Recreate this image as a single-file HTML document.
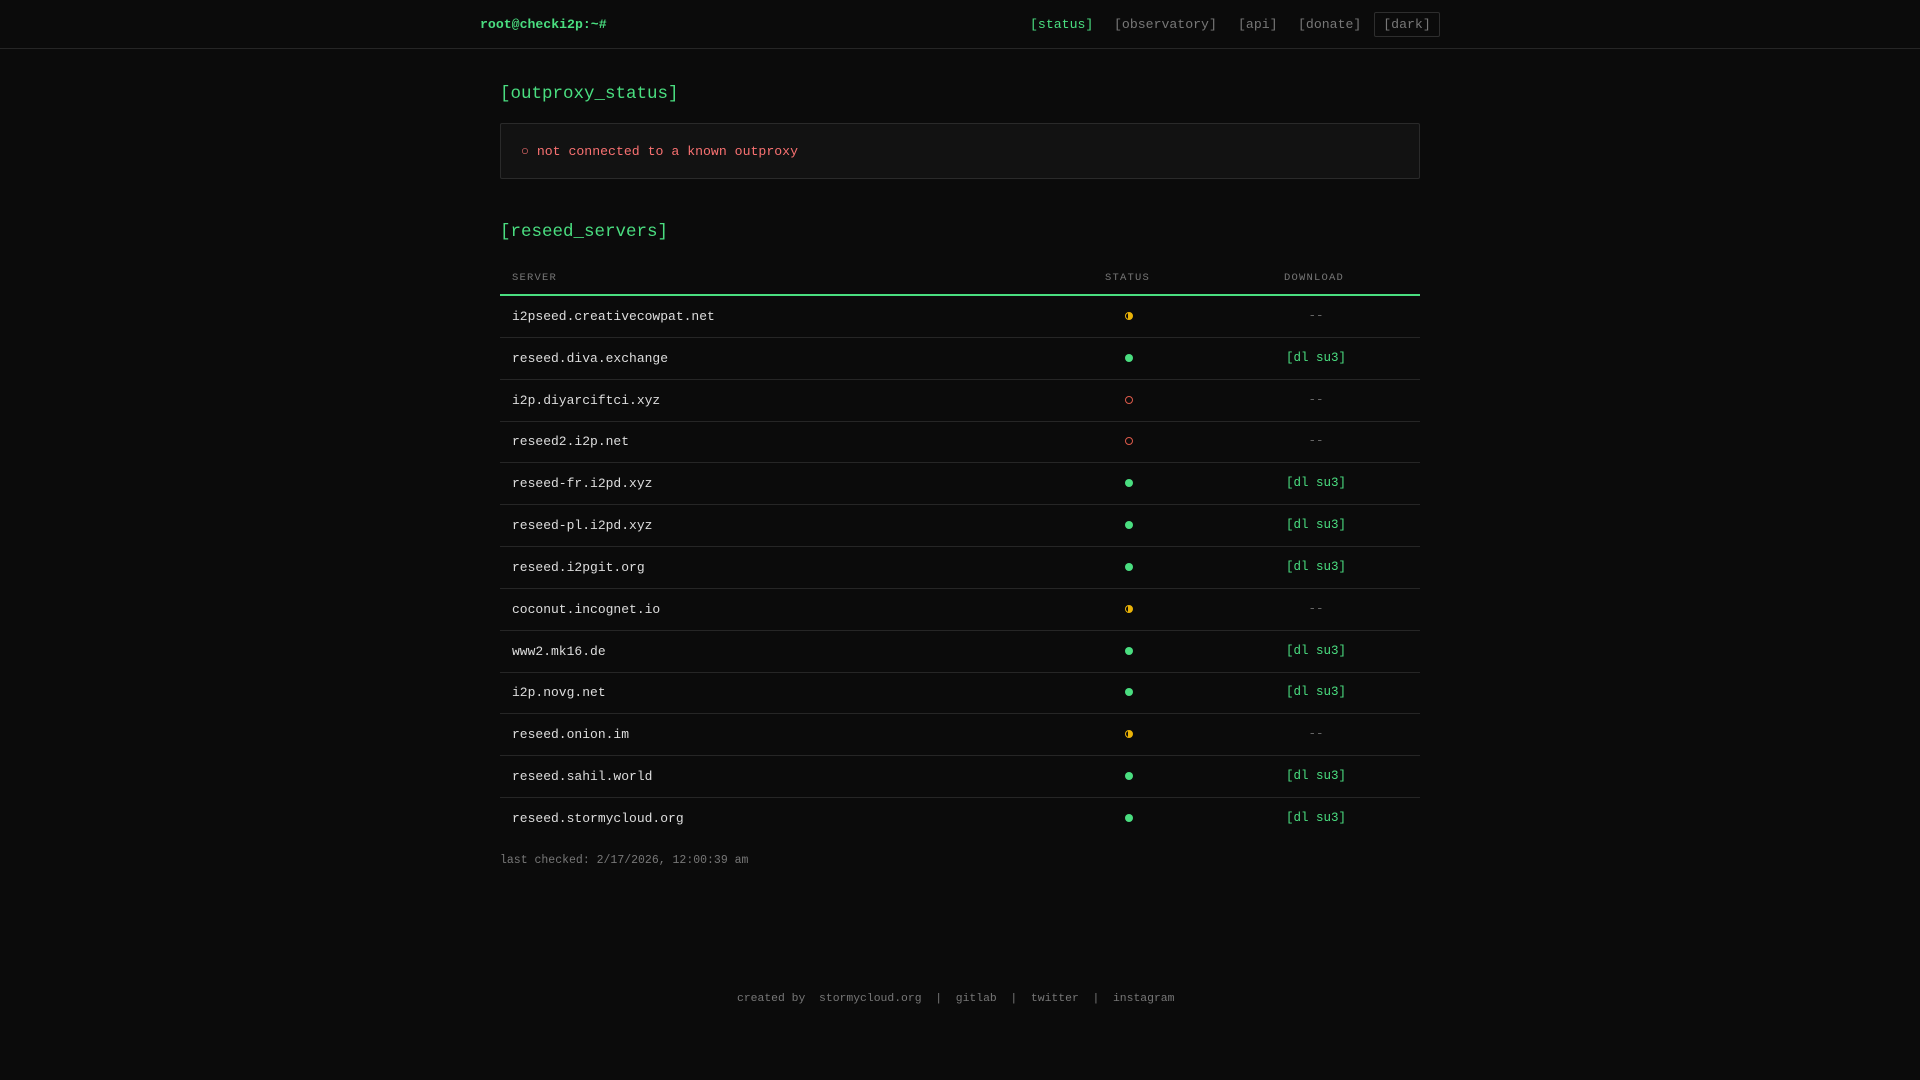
<!DOCTYPE html>
<html><head><meta charset="utf-8"><style>
*{box-sizing:border-box;margin:0;padding:0}
body{width:1920px;height:1080px;background:#0b0b0b;font-family:"Liberation Mono",monospace;color:#d4d4d4;position:relative;overflow:hidden}
.hdr{position:absolute;left:0;top:0;width:1920px;height:49px;border-bottom:1px solid #262626}
.logo{position:absolute;left:480px;top:17px;font-size:13.2px;font-weight:bold;color:#4ade80}
.nav{position:absolute;top:17px;font-size:13.2px;color:#777}
.dark{position:absolute;left:1374px;top:12px;width:66px;height:25px;border:1px solid #2e2e2e;border-radius:2px;font-size:13.2px;color:#777;text-align:center;line-height:23px}
h2{position:absolute;left:500px;font-size:17.5px;color:#4ade80;font-weight:normal}
.box{position:absolute;left:500px;top:123px;width:920px;height:56px;background:#121212;border:1px solid #2a2a2a;border-radius:2px}
.box span{position:absolute;left:20px;top:20px;font-size:13.2px;color:#f87171}
.th{position:absolute;top:272px;font-size:10.5px;letter-spacing:1.2px;color:#777}
.gl{position:absolute;left:500px;top:294px;width:920px;height:2px;background:#4ade80}
.row{position:absolute;left:500px;width:920px;height:42px;border-bottom:1px solid #262626}
.row .n{position:absolute;left:12px;top:13px;font-size:13px;color:#ddd}
.row .s{position:absolute;left:625px;top:16px;width:8px;height:8px;border-radius:50%}
.g{background:#4ade80}
.y{background:linear-gradient(90deg,#0b0b0b 0 35%,#eab308 35%);border:1.5px solid #eab308}
.r{border:1.3px solid #dc5a4a}
.row .d{position:absolute;left:756px;width:120px;text-align:center;top:13px;font-size:12.5px;white-space:nowrap}
.dl{color:#4ade80}.dd{color:#666}
.lc{position:absolute;left:500px;top:854px;font-size:11.5px;color:#777}
.ft{position:absolute;left:737px;top:993px;font-size:11.4px;color:#777;white-space:pre}
</style></head><body>
<div class="hdr">
<div class="logo">root@checki2p:~#</div>
<div class="nav" style="left:1030px;color:#4ade80">[status]</div>
<div class="nav" style="left:1114px">[observatory]</div>
<div class="nav" style="left:1238px">[api]</div>
<div class="nav" style="left:1298px">[donate]</div>
<div class="dark">[dark]</div>
</div>
<h2 style="top:84px">[outproxy_status]</h2>
<div class="box"><span>○ not connected to a known outproxy</span></div>
<h2 style="top:222px">[reseed_servers]</h2>
<div class="th" style="left:512px">SERVER</div>
<div class="th" style="left:1105px">STATUS</div>
<div class="th" style="left:1284px">DOWNLOAD</div>
<div class="gl"></div>
<div class="row" style="top:296px"><span class="n">i2pseed.creativecowpat.net</span><i class="s y"></i><div class="d dd">--</div></div>
<div class="row" style="top:338px"><span class="n">reseed.diva.exchange</span><i class="s g"></i><div class="d dl">[dl su3]</div></div>
<div class="row" style="top:380px"><span class="n">i2p.diyarciftci.xyz</span><i class="s r"></i><div class="d dd">--</div></div>
<div class="row" style="top:421px"><span class="n">reseed2.i2p.net</span><i class="s r"></i><div class="d dd">--</div></div>
<div class="row" style="top:463px"><span class="n">reseed-fr.i2pd.xyz</span><i class="s g"></i><div class="d dl">[dl su3]</div></div>
<div class="row" style="top:505px"><span class="n">reseed-pl.i2pd.xyz</span><i class="s g"></i><div class="d dl">[dl su3]</div></div>
<div class="row" style="top:547px"><span class="n">reseed.i2pgit.org</span><i class="s g"></i><div class="d dl">[dl su3]</div></div>
<div class="row" style="top:589px"><span class="n">coconut.incognet.io</span><i class="s y"></i><div class="d dd">--</div></div>
<div class="row" style="top:631px"><span class="n">www2.mk16.de</span><i class="s g"></i><div class="d dl">[dl su3]</div></div>
<div class="row" style="top:672px"><span class="n">i2p.novg.net</span><i class="s g"></i><div class="d dl">[dl su3]</div></div>
<div class="row" style="top:714px"><span class="n">reseed.onion.im</span><i class="s y"></i><div class="d dd">--</div></div>
<div class="row" style="top:756px"><span class="n">reseed.sahil.world</span><i class="s g"></i><div class="d dl">[dl su3]</div></div>
<div class="row" style="top:798px;border-bottom:none"><span class="n">reseed.stormycloud.org</span><i class="s g"></i><div class="d dl">[dl su3]</div></div>
<div class="lc">last checked: 2/17/2026, 12:00:39 am</div>
<div class="ft">created by  stormycloud.org  |  gitlab  |  twitter  |  instagram</div>
</body></html>
